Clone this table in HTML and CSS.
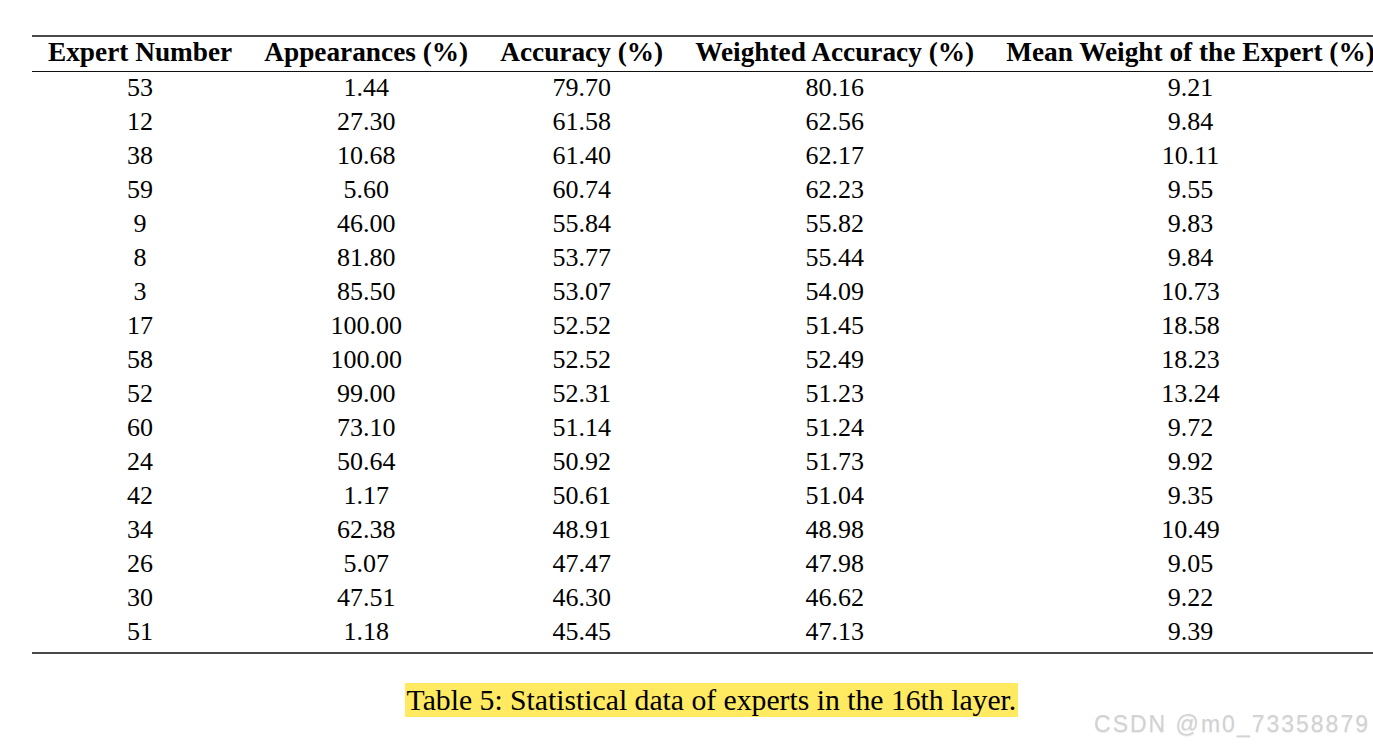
FILE: index.html
```html
<!DOCTYPE html>
<html>
<head>
<meta charset="utf-8">
<link rel="stylesheet" href="styles.css">
</head>
<body>
<div class="page">
  <div class="figure">
    <table class="stats">
      <thead>
        <tr>
          <th>Expert Number</th>
          <th>Appearances (%)</th>
          <th>Accuracy (%)</th>
          <th>Weighted Accuracy (%)</th>
          <th>Mean Weight of the Expert (%)</th>
        </tr>
      </thead>
      <tbody>
        <tr><td>53</td><td>1.44</td><td>79.70</td><td>80.16</td><td>9.21</td></tr>
        <tr><td>12</td><td>27.30</td><td>61.58</td><td>62.56</td><td>9.84</td></tr>
        <tr><td>38</td><td>10.68</td><td>61.40</td><td>62.17</td><td>10.11</td></tr>
        <tr><td>59</td><td>5.60</td><td>60.74</td><td>62.23</td><td>9.55</td></tr>
        <tr><td>9</td><td>46.00</td><td>55.84</td><td>55.82</td><td>9.83</td></tr>
        <tr><td>8</td><td>81.80</td><td>53.77</td><td>55.44</td><td>9.84</td></tr>
        <tr><td>3</td><td>85.50</td><td>53.07</td><td>54.09</td><td>10.73</td></tr>
        <tr><td>17</td><td>100.00</td><td>52.52</td><td>51.45</td><td>18.58</td></tr>
        <tr><td>58</td><td>100.00</td><td>52.52</td><td>52.49</td><td>18.23</td></tr>
        <tr><td>52</td><td>99.00</td><td>52.31</td><td>51.23</td><td>13.24</td></tr>
        <tr><td>60</td><td>73.10</td><td>51.14</td><td>51.24</td><td>9.72</td></tr>
        <tr><td>24</td><td>50.64</td><td>50.92</td><td>51.73</td><td>9.92</td></tr>
        <tr><td>42</td><td>1.17</td><td>50.61</td><td>51.04</td><td>9.35</td></tr>
        <tr><td>34</td><td>62.38</td><td>48.91</td><td>48.98</td><td>10.49</td></tr>
        <tr><td>26</td><td>5.07</td><td>47.47</td><td>47.98</td><td>9.05</td></tr>
        <tr><td>30</td><td>47.51</td><td>46.30</td><td>46.62</td><td>9.22</td></tr>
        <tr class="last"><td>51</td><td>1.18</td><td>45.45</td><td>47.13</td><td>9.39</td></tr>
      </tbody>
    </table>
    <div class="caption"><span class="caption-text">Table 5: Statistical data of experts in the 16th layer.</span></div>
  </div>
</div>
<div class="watermark">CSDN @m0_73358879</div>
</body>
</html>
```

FILE: styles.css
```css
html, body {
  margin: 0;
  padding: 0;
  background: #ffffff;
  overflow: hidden;
  width: 1373px;
  height: 747px;
}

.page {
  padding-top: 35px;
  padding-left: 32px;
  width: 2000px;
}

.figure {
  display: inline-block;
}

.stats {
  border-collapse: collapse;
  font-family: "Liberation Serif", "Times New Roman", serif;
  color: #000;
}

.stats th {
  font-weight: bold;
  font-size: 27.3px;
  line-height: 31px;
  height: 34px;
  padding: 0 16px 3px 16px;
  box-sizing: border-box;
  white-space: nowrap;
  border-top: 2px solid #4a4a4a;
  border-bottom: 1px solid #111;
  text-align: center;
}

.stats td {
  font-size: 26px;
  line-height: 31px;
  height: 34px;
  padding: 0 16px 3px 16px;
  box-sizing: border-box;
  white-space: nowrap;
  text-align: center;
}

.stats tr.last td {
  height: 36px;
  padding-bottom: 5px;
  border-bottom: 2px solid #4a4a4a;
}

.caption {
  text-align: center;
  margin-top: 29px;
}

.caption-text {
  display: inline-block;
  font-family: "Liberation Serif", "Times New Roman", serif;
  font-size: 29.7px;
  line-height: 34px;
  background: #ffea61;
  color: #000;
  padding: 0 2px;
}

.watermark {
  position: absolute;
  right: 3px;
  bottom: 10px;
  font-family: "Liberation Sans", Arial, sans-serif;
  font-size: 23px;
  line-height: 26px;
  letter-spacing: 2px;
  color: #d2d2d2;
  text-shadow: 0 1px 1px rgba(0, 0, 0, 0.08);
}
```
